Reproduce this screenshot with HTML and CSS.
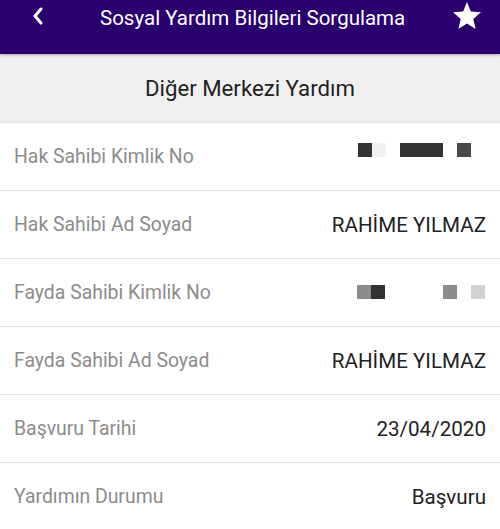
FILE: index.html
```html
<!DOCTYPE html>
<html>
<head>
  <title>Sosyal Yardım Bilgileri Sorgulama</title>
  <link rel="stylesheet" href="styles.css">
</head>
<body>
  <div class="topbar">
    <span class="back">
      <svg width="14" height="20" viewBox="0 0 14 20"><path d="M10 3 L4 10 L10 17" fill="none" stroke="#fff" stroke-width="3" stroke-linecap="round" stroke-linejoin="round"/></svg>
    </span>
    <span class="topbar-title">Sosyal Yardım Bilgileri Sorgulama</span>
    <span class="star">
      <svg width="32" height="32" viewBox="0 0 24 24"><path d="M12 1.5 L14.9 8.6 L22.5 9.2 L16.7 14.2 L18.5 21.7 L12 17.6 L5.5 21.7 L7.3 14.2 L1.5 9.2 L9.1 8.6 Z" fill="#fff"/></svg>
    </span>
  </div>

  <div class="section-title">Diğer Merkezi Yardım</div>

  <div class="rows">
    <div class="row">
      <span class="label">Hak Sahibi Kimlik No</span>
      <span class="mask">
        <i class="px dark"></i><i class="px faint"></i><i class="gap"></i><i class="px wide dark"></i><i class="gap"></i><i class="px mid"></i><i class="gap"></i>
      </span>
    </div>
    <div class="row">
      <span class="label">Hak Sahibi Ad Soyad</span>
      <span class="value">RAHİME YILMAZ</span>
    </div>
    <div class="row">
      <span class="label">Fayda Sahibi Kimlik No</span>
      <span class="mask low">
        <i class="px grey"></i><i class="px dark"></i><i class="gap long"></i><i class="px grey"></i><i class="gap"></i><i class="px light"></i>
      </span>
    </div>
    <div class="row">
      <span class="label">Fayda Sahibi Ad Soyad</span>
      <span class="value">RAHİME YILMAZ</span>
    </div>
    <div class="row">
      <span class="label">Başvuru Tarihi</span>
      <span class="value">23/04/2020</span>
    </div>
    <div class="row">
      <span class="label">Yardımın Durumu</span>
      <span class="value">Başvuru</span>
    </div>
  </div>
</body>
</html>
```

FILE: styles.css
```css
body {
  margin: 0;
  background-color: #fff;
  font-family: Roboto, "Noto Sans", sans-serif;
  overflow: hidden;
}

.topbar {
  height: 54px;
  background-color: #2a006f;
  color: #fff;
  display: flex;
  align-items: flex-start;
  box-shadow: 0 1px 3px rgba(0, 0, 0, 0.3);
  position: relative;
}

.back {
  width: 76px;
  height: 36px;
  display: flex;
  align-items: center;
  justify-content: center;
  margin-top: -2px;
}

.topbar-title {
  flex: 1;
  font-size: 20.5px;
  line-height: 36px;
  padding-left: 24px;
}

.star {
  width: 66px;
  height: 36px;
  display: flex;
  align-items: center;
  justify-content: center;
  margin-top: -2px;
}

.section-title {
  height: 68px;
  background-color: #f0f0f0;
  border-bottom: 1px solid #e2e2e2;
  display: flex;
  align-items: center;
  justify-content: center;
  font-size: 22.2px;
  color: #222;
}

.row {
  height: 67px;
  border-bottom: 1px solid #e2e2e2;
  display: flex;
  align-items: center;
  justify-content: space-between;
  padding: 0 14px;
}

.label {
  color: #8c8c8c;
  font-size: 19.4px;
}

.value {
  color: #222;
  font-size: 20.6px;
}

.mask {
  display: flex;
  margin-top: -14px;
  margin-right: 1px;
}

.mask.low {
  margin-top: -1px;
}

.px,
.gap {
  display: block;
  width: 14px;
  height: 14px;
}

.gap.long {
  width: 58px;
}

.px.wide {
  width: 43px;
}

.dark {
  background-color: #333;
}

.faint {
  background-color: #f1f1f1;
}

.mid {
  background-color: #4a4a4a;
}

.grey {
  background-color: #8c8c8c;
}

.light {
  background-color: #d2d2d2;
}
```
